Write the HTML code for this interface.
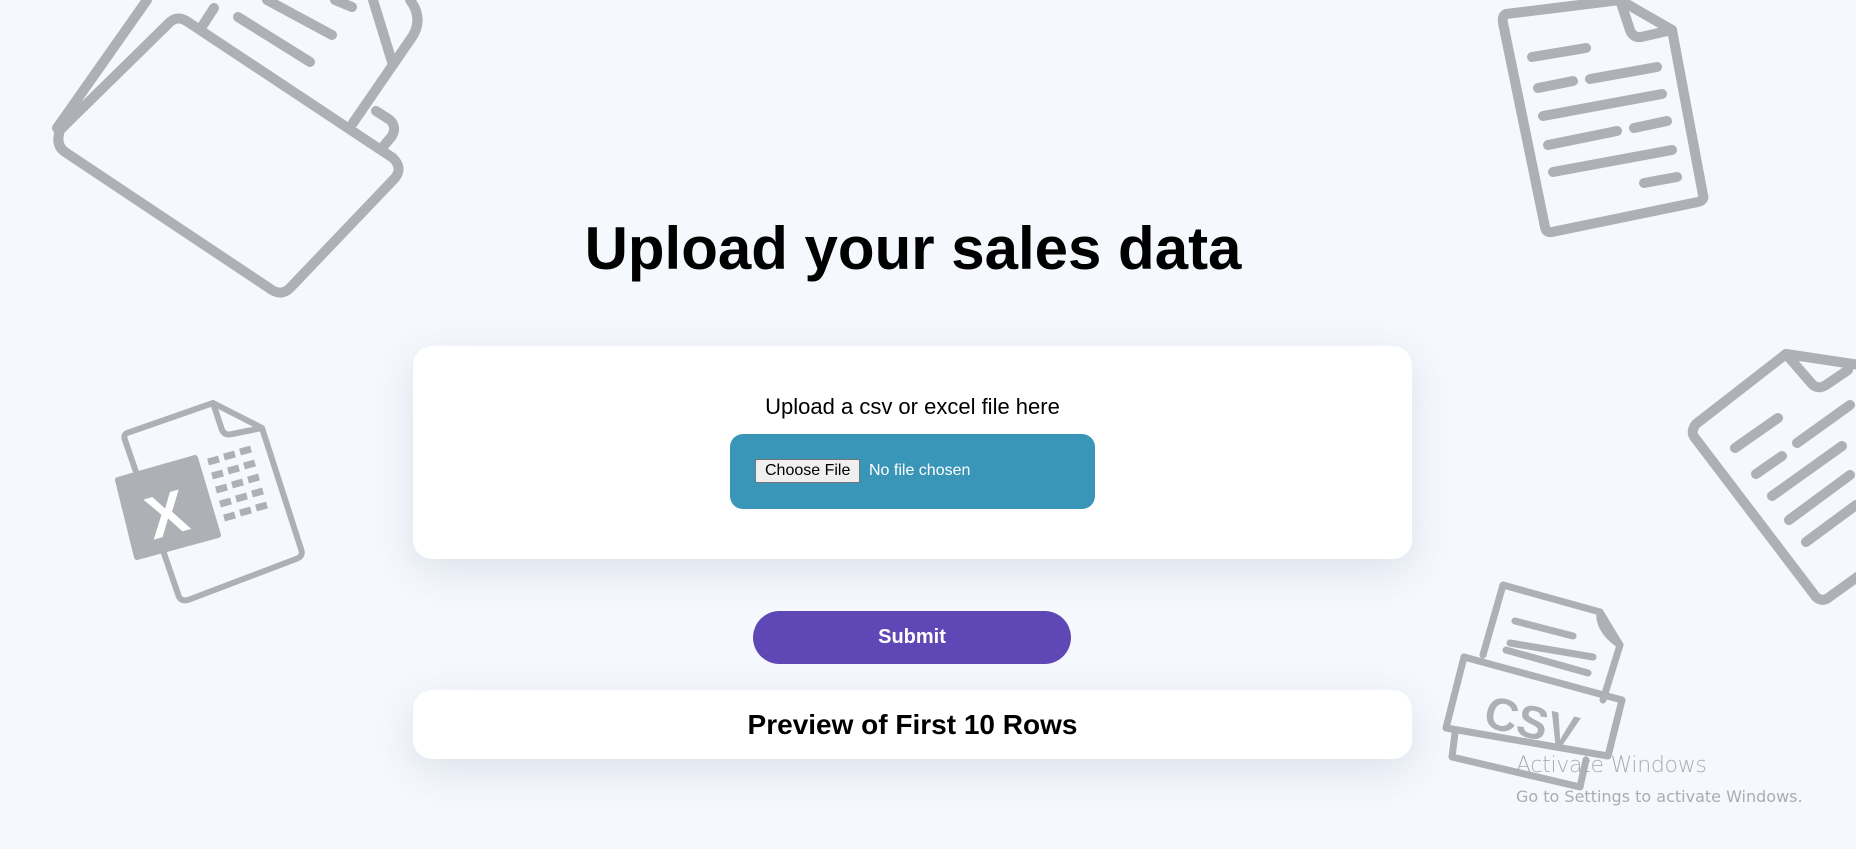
<!DOCTYPE html>
<html><head><meta charset="utf-8"><style>
*{box-sizing:border-box;margin:0;padding:0}
html,body{width:1856px;height:849px;overflow:hidden;background:#f5f9fe;font-family:"Liberation Sans",Arial,sans-serif}
.bg{position:absolute;left:0;top:0}
h1{position:absolute;left:0;width:1826px;text-align:center;top:214px;font-size:60px;font-weight:bold;color:#000}
.card{position:absolute;left:413px;width:999px;background:#fff;border-radius:19px;box-shadow:0 12px 40px rgba(60,70,90,0.13)}
.c1{top:346px;height:213px}
.lbl{position:absolute;top:48px;width:100%;text-align:center;font-size:22px;color:#000}
.up{position:absolute;left:317px;top:88px;width:365px;height:75px;background:#3a96b8;border-radius:13px}
.btn{position:absolute;left:25px;top:25px;height:24px;padding:0 9px;background:#efefef;border:1px solid #767676;border-radius:2px;font-size:16px;line-height:22px;color:#000}
.nf{position:absolute;left:139px;top:26px;font-size:16px;color:#fff;line-height:22px}
.sub{position:absolute;left:753px;top:611px;width:318px;height:53px;background:#5f48b5;border-radius:27px;color:#fff;font-weight:bold;font-size:20px;text-align:center;line-height:53px}
.c2{top:690px;height:69px;text-align:center;font-weight:bold;font-size:28px;line-height:69px;color:#000}
.aw{position:absolute;left:1516px;top:753px;color:#a9adb2;font-size:22px;font-family:"DejaVu Sans","Liberation Sans",sans-serif;font-weight:300;letter-spacing:-0.3px}
.aw2{position:absolute;left:1516px;top:787px;color:#a9adb2;font-size:16px;font-family:"DejaVu Sans","Liberation Sans",sans-serif}
</style></head><body>
<svg class="bg" width="1856" height="849" viewBox="0 0 1856 849" fill="none" stroke="#adb0b4" stroke-width="10" stroke-linecap="round" stroke-linejoin="round">
<path d="M57 128 L147 0"/>
<path d="M410 0 Q425 20 410 40 L353 123"/>
<path d="M373 0 L393 65"/>
<path d="M203 25 L214 8"/>
<path d="M238 17 L310 62"/>
<path d="M267 0 L332 35"/>
<path d="M335 0 L352 7"/>
<path d="M376 111 L390 120 Q397 127 392 136 L382 148"/>
<path d="M60 130 Q55 145 65 152 L272 290 Q282 296 290 288 L395 178 Q403 168 393 158 L188 22 Q178 15 170 22 Z"/>
<path d="M127 433 L213 403 L262 428 L301 549 Q304 556 296 559 L188 600 Q180 602 178 594 L125 440 Q123 435 127 433 Z" stroke-width="6"/>
<path d="M213 403 L222 430 Q225 436 232 434 L262 428" stroke-width="6"/>
<path d="M118 480 L195 458 L218 535 L137 557 Z" fill="#adb0b4" stroke-width="6"/>
<text x="167" y="535" fill="#fff" stroke="none" font-family="Liberation Sans,sans-serif" font-size="60" font-weight="bold" text-anchor="middle" transform="rotate(-16 167 515)">X</text>
<g stroke-width="7" stroke-linecap="butt">
<path d="M208 462 L219 459 M224 457 L235 454 M240 452 L251 449"/>
<path d="M212 476 L223 473 M228 471 L239 468 M244 466 L255 463"/>
<path d="M216 490 L227 487 M232 485 L243 482 M248 480 L259 477"/>
<path d="M220 504 L231 501 M236 499 L247 496 M252 494 L263 491"/>
<path d="M224 518 L235 515 M240 513 L251 510 M256 508 L267 505"/>
</g>
<path d="M1506 14 L1620 0 L1672 30 L1703 195 Q1705 200 1698 202 L1552 232 Q1546 233 1545 227 L1503 23 Q1502 16 1506 14 Z"/>
<path d="M1620 0 L1630 30 Q1633 38 1641 37 L1672 30"/>
<path d="M1532 57 L1586 48 M1538 88 L1573 81 M1590 79 L1657 67 M1543 116 L1662 94 M1548 145 L1617 131 M1634 128 L1667 121 M1553 172 L1672 150 M1644 183 L1677 177"/>
<path d="M1696 424 L1786 354 L1860 365 M1696 424 Q1690 432 1695 438 L1816 597 Q1822 602 1828 598 L1860 575"/>
<path d="M1786 354 L1812 384 Q1818 390 1826 385 L1848 370"/>
<path d="M1735 448 L1778 418 M1756 474 L1782 456 M1797 443 L1850 405 M1772 496 L1842 446 M1789 520 L1850 475 M1806 542 L1856 505"/>
<g stroke-width="7">
<path d="M1483 655 L1503 585 L1600 612 Q1598 630 1620 645 L1603 700"/>
<path d="M1600 612 L1620 645"/>
<path d="M1515 621 L1573 636 M1510 643 L1593 657 M1506 650 L1588 673"/>
<path d="M1464 657 L1622 700 L1608 756 L1446 728 Z"/>
<path d="M1455 733 L1452 757 L1580 787 L1586 760"/>
</g>
<text x="1532" y="738" fill="#adb0b4" stroke="none" font-family="Liberation Sans,sans-serif" font-size="46" font-weight="bold" text-anchor="middle" transform="rotate(14 1532 720)">CSV</text>
</svg>
<h1>Upload your sales data</h1>
<div class="card c1">
<div class="lbl">Upload a csv or excel file here</div>
<div class="up"><div class="btn">Choose File</div><div class="nf">No file chosen</div></div>
</div>
<div class="sub">Submit</div>
<div class="card c2">Preview of First 10 Rows</div>
<div class="aw">Activate Windows</div>
<div class="aw2">Go to Settings to activate Windows.</div>
</body></html>
